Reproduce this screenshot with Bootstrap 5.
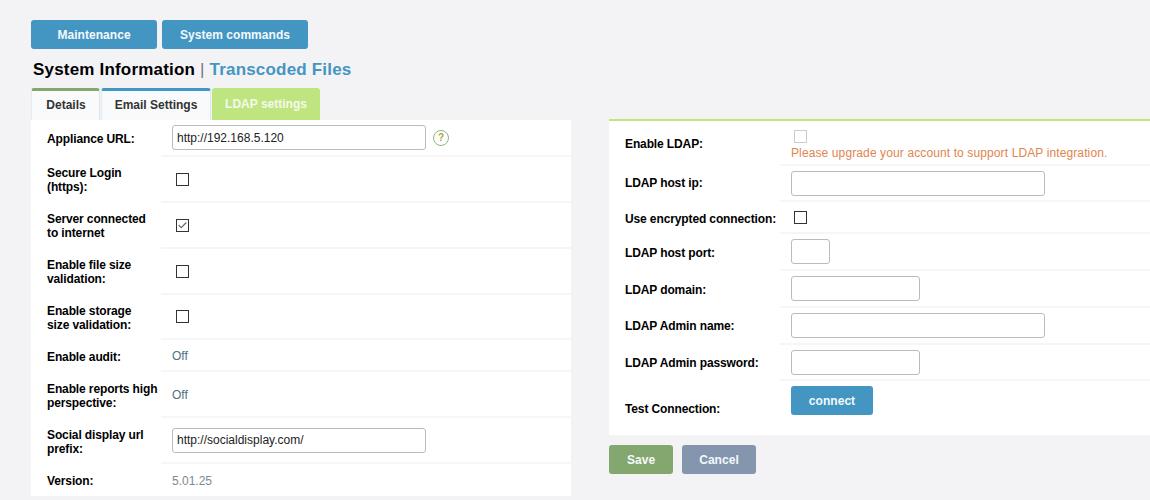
<!DOCTYPE html>
<html lang="en">
<head>
<meta charset="utf-8">
<title>System Information</title>
<link rel="stylesheet" href="https://cdn.jsdelivr.net/npm/bootstrap@5.3.0/dist/css/bootstrap.min.css">
<style>
html,body{height:500px;overflow:hidden}
body{background:#f3f3f6;font-family:"Liberation Sans",Arial,sans-serif;font-size:12px;color:#000}
.pg{padding:20px 0 0 31px;width:1150px}
.btn-gap{gap:5px}
.tool-btn{height:29px;border:0;border-radius:3px;background:#4396c2;color:#f4f9fc;font-weight:700;font-size:12px;line-height:28px;padding:1px 0 0;text-align:center;letter-spacing:.05px}
.tool-btn:hover{background:#4396c2;color:#f4f9fc}
.w-maint{width:126px}.w-sys{width:146px}.w-conn{width:82px}.w-save{width:64px;background:#83a76e}.w-cancel{width:74px;background:#8496ae}
.w-save:hover{background:#83a76e}.w-cancel:hover{background:#8496ae}
.head-line{margin:11px 0 0;height:28px;line-height:20px;font-size:17px;font-weight:700;padding-left:2px;color:#000;letter-spacing:.19px}
.head-line .sep{color:#777;font-weight:400}
.head-line .lnk{color:#4396c2}
.tabs-row{height:32px;gap:1px}
.tab-i{height:32px;font-weight:700;text-align:center;background:#f9fafb;color:#333;border-radius:3px 3px 0 0;border-top:3px solid #83a76e;line-height:29px;border-left:1px solid #e3ebf1;border-right:1px solid #dbe6ee}
.tab-a{width:69px;padding-left:1px}
.tab-b{width:110px;border-top-color:#4396c2}
.tab-c{width:108px;background:#bfe581;color:#f4f9ea;border:0;line-height:32px}
.left-col{width:540px}
.right-col{width:541px;margin-left:38px;padding-top:31px}
.panel-r{border-top:2px solid #bfe581}
.f-row{display:flex}
.f-lab{flex:none;background:#fff;font-weight:700;display:flex;align-items:center;line-height:14px;color:#000;letter-spacing:-.12px}
.left-col .f-lab{width:130px;padding-left:16px}
.panel-r .f-lab{width:171px;padding-left:16px}
.left-col .f-lab.nudge,.panel-r .f-lab.nudge,.f-val.nudge{padding-top:2px}
.left-col .f-lab.lift,.panel-r .f-lab.lift{padding-bottom:2px}
.f-val{flex:1;background:#fff;border-bottom:2px solid #f6f6f8;display:flex;align-items:center;padding-left:11px;color:#4f6f82}
.f-last{border-bottom:0}
.f-in{height:25px;border:1px solid #bbb;border-radius:3px;font-size:12px;padding:0 4px;color:#222;min-height:0;font-family:"Liberation Sans",Arial,sans-serif;box-shadow:none}
.in-lg{width:254px}.in-md{width:129px}.in-sm{width:39px}
.box-c{appearance:none;-webkit-appearance:none;width:13px;height:13px;margin:0 0 0 4px;border:1px solid #333;background:#fff;display:block;flex:none}
.box-c:checked{background-image:url("data:image/svg+xml,%3Csvg xmlns='http://www.w3.org/2000/svg' viewBox='0 0 13 13'%3E%3Cpath d='M2 6l3 3 6-6' fill='none' stroke='%23666' stroke-width='1.4'/%3E%3C/svg%3E")}
.box-c:disabled{border-color:#ccc;opacity:1}
.panel-r .box-c{margin-left:3px}
.hlp{width:16px;height:16px;margin-left:7px;border:1px solid #8fb57c;border-radius:50%;font-size:10px;font-weight:700;line-height:14px;text-align:center;color:#b0a24a;flex:none}
.off{color:#4f6f82}
.ver{color:#7c8a92}
.warn{color:#e0854f;line-height:14px;font-size:12px;letter-spacing:.115px;margin-top:3px}
.stack{align-self:flex-start;padding-top:9px}
.conn-wrap{align-items:flex-start;padding-top:5px}
.save-row{margin-top:10px;gap:9px}
.h37{height:37px}.h46{height:46px}.h45{height:45px}.h32{height:32px}
.h36{height:36px}.h54{height:54px}
</style>
</head>
<body>
<div class="pg">
  <div class="d-flex btn-gap">
    <button type="button" class="btn tool-btn w-maint">Maintenance</button>
    <button type="button" class="btn tool-btn w-sys">System commands</button>
  </div>
  <div class="head-line">System Information <span class="sep">|</span> <span class="lnk">Transcoded Files</span></div>
  <div class="d-flex">
    <div class="left-col">
      <div class="d-flex tabs-row">
        <div class="tab-i tab-a">Details</div>
        <div class="tab-i tab-b">Email Settings</div>
        <div class="tab-i tab-c">LDAP settings</div>
      </div>
      <div class="f-row h37"><div class="f-lab">Appliance URL:</div><div class="f-val"><input class="form-control f-in in-lg" type="text" value="http://192.168.5.120"><span class="hlp">?</span></div></div>
      <div class="f-row h46"><div class="f-lab"><span>Secure Login<br>(https):</span></div><div class="f-val"><input class="box-c" type="checkbox"></div></div>
      <div class="f-row h46"><div class="f-lab"><span>Server connected<br>to internet</span></div><div class="f-val"><input class="box-c" type="checkbox" checked></div></div>
      <div class="f-row h46"><div class="f-lab"><span>Enable file size<br>validation:</span></div><div class="f-val"><input class="box-c" type="checkbox"></div></div>
      <div class="f-row h45"><div class="f-lab"><span>Enable storage<br>size validation:</span></div><div class="f-val"><input class="box-c" type="checkbox"></div></div>
      <div class="f-row h32"><div class="f-lab nudge">Enable audit:</div><div class="f-val off nudge">Off</div></div>
      <div class="f-row h46"><div class="f-lab nudge"><span>Enable reports high<br>perspective:</span></div><div class="f-val off nudge">Off</div></div>
      <div class="f-row h46"><div class="f-lab nudge"><span>Social display url<br>prefix:</span></div><div class="f-val"><input class="form-control f-in in-lg" type="text" value="http://socialdisplay.com/"></div></div>
      <div class="f-row h32"><div class="f-lab nudge">Version:</div><div class="f-val f-last ver nudge">5.01.25</div></div>
    </div>
    <div class="right-col">
      <div class="panel-r">
        <div class="f-row h45"><div class="f-lab">Enable LDAP:</div><div class="f-val"><div class="stack"><input class="box-c" type="checkbox" disabled><div class="warn">Please upgrade your account to support LDAP integration.</div></div></div></div>
        <div class="f-row h36"><div class="f-lab lift">LDAP host ip:</div><div class="f-val"><input class="form-control f-in in-lg" type="text"></div></div>
        <div class="f-row h32"><div class="f-lab nudge">Use encrypted connection:</div><div class="f-val"><input class="box-c" type="checkbox"></div></div>
        <div class="f-row h37"><div class="f-lab">LDAP host port:</div><div class="f-val"><input class="form-control f-in in-sm" type="text"></div></div>
        <div class="f-row h37"><div class="f-lab">LDAP domain:</div><div class="f-val"><input class="form-control f-in in-md" type="text"></div></div>
        <div class="f-row h37"><div class="f-lab lift">LDAP Admin name:</div><div class="f-val"><input class="form-control f-in in-lg" type="text"></div></div>
        <div class="f-row h36"><div class="f-lab">LDAP Admin password:</div><div class="f-val"><input class="form-control f-in in-md" type="text"></div></div>
        <div class="f-row h54"><div class="f-lab nudge">Test Connection:</div><div class="f-val f-last conn-wrap"><button type="button" class="btn tool-btn w-conn">connect</button></div></div>
      </div>
      <div class="d-flex save-row">
        <button type="button" class="btn tool-btn w-save">Save</button>
        <button type="button" class="btn tool-btn w-cancel">Cancel</button>
      </div>
    </div>
  </div>
</div>
</body>
</html>
